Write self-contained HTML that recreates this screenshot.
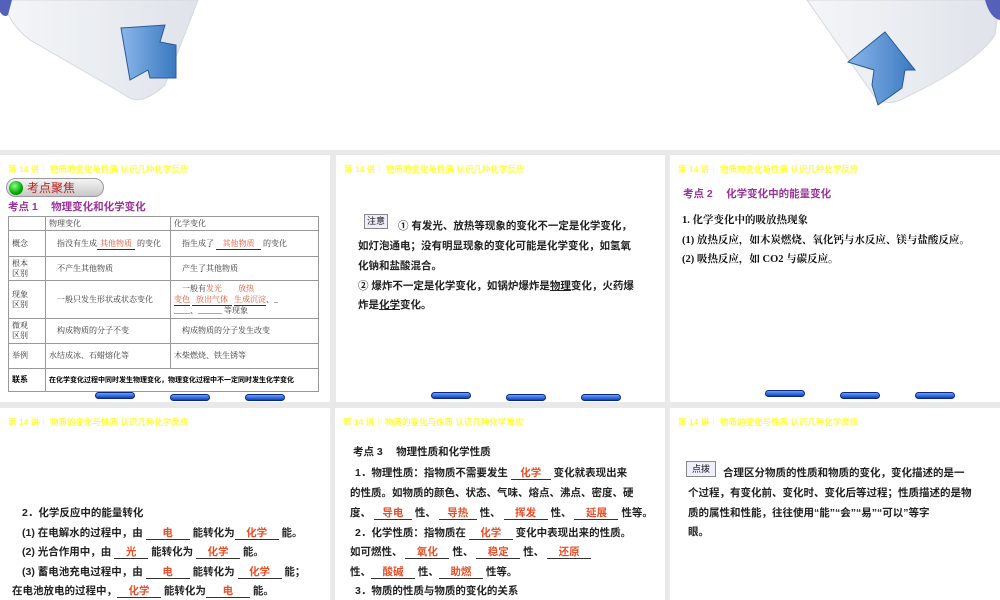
<!DOCTYPE html>
<html><head><meta charset="utf-8"><style>
*{margin:0;padding:0;box-sizing:border-box}
body{width:1000px;height:600px;overflow:hidden;background:#fff;position:relative;font-family:"Liberation Sans","Noto Sans CJK SC",sans-serif;color:#111}
.bg{position:absolute;left:0;top:150px;width:1000px;height:450px;background:#e9e9e9}
.s{position:absolute;background:#fff;overflow:hidden}
.hd{position:absolute;left:8px;top:8px;font-size:8.5px;color:#ffff40;font-weight:bold;white-space:nowrap}
.t{position:absolute;white-space:nowrap;font-size:10.5px;line-height:14px}
.b .t{font-weight:bold;color:#222}
.sf{font-family:"Liberation Serif","Noto Serif CJK SC",serif}
.p{color:#993399;font-weight:bold;font-size:10.5px}
.r{color:#e8502a}
.u{display:inline-block;border-bottom:1px solid #333;text-align:center;line-height:11px}
.nav{position:absolute;width:40px;height:7px;border-radius:4px;background:linear-gradient(#6aa0ff,#1040c0);border:1px solid #0a2a80}
table{position:absolute;left:8px;top:216px;border-collapse:collapse;font-size:8px;color:#333;font-family:"Liberation Serif","Noto Serif CJK SC",serif}
td{border:1px solid #999;padding:0 3px;vertical-align:middle;line-height:10px}
</style></head><body>
<svg style="position:absolute;left:0;top:0" width="1000" height="110">
<defs><linearGradient id="g" x1="0" x2="1"><stop offset="0" stop-color="#f4f6f8"/><stop offset="1" stop-color="#dfe3ea"/></linearGradient>
<linearGradient id="b" x1="0" x2="1"><stop offset="0" stop-color="#8ab6ea"/><stop offset="1" stop-color="#3a78c0"/></linearGradient></defs>
<path d="M2,0 L198,0 L165,85 Q140,108 125,95 L30,40 Q10,25 2,0Z" fill="url(#g)" stroke="#d6d8dc"/>
<path d="M0,0 L12,0 L8,15 Q4,18 0,12Z" fill="#5560b8"/>
<path d="M121,28 L165,25 L160,42 L176,45 L176,78 L150,78 L148,70 L130,80Z" fill="url(#b)" stroke="#2a5a98" stroke-width="1"/>
<path d="M807,0 L1000,0 L995,35 Q975,65 900,100 Q880,108 870,90Z" fill="url(#g)" stroke="#d6d8dc"/>
<path d="M985,0 L1000,0 L1000,20 Q990,18 985,0Z" fill="#5560b8"/>
<path d="M885,32 L915,70 L905,70 L902,88 L878,105 L872,85 L874,70 L848,62Z" fill="url(#b)" stroke="#2a5a98"/>
</svg>
<div class="bg"></div>

<div class="s" style="left:0;top:155px;width:330px;height:247px">
<div class="hd">第 14 讲｜ 物质的变化与性质 认识几种化学反应</div>
<div style="position:absolute;left:6px;top:23px;width:98px;height:19px;border-radius:10px;background:linear-gradient(#f4f4f4,#c8c8c8);border:1px solid #999"></div>
<div style="position:absolute;left:9px;top:26px;width:14px;height:14px;border-radius:50%;background:radial-gradient(circle at 40% 35%,#8f8,#0a0 60%,#060)"></div>
<div class="t" style="left:27px;top:26px;font-size:12px;color:#c02020">考点聚焦</div>
<div class="t p" style="left:8px;top:45px">考点 1　 物理变化和化学变化</div>
<table style="top:61px">
<tr style="height:14px"><td style="width:37px"></td><td style="width:125px">物理变化</td><td style="width:148px">化学变化</td></tr>
<tr style="height:26px"><td>概念</td><td>　指没有生成<span class="u r" style="width:38px">其他物质</span> 的变化</td><td>　指生成了 <span class="u r" style="width:45px">其他物质</span> 的变化</td></tr>
<tr style="height:24px"><td>根本<br>区别</td><td>　不产生其他物质</td><td>　产生了其他物质</td></tr>
<tr style="height:38px"><td>现象<br>区别</td><td>　一般只发生形状或状态变化</td><td>　一般有<span class="r">发光</span>　　<span class="r">放热</span><br><span class="u r">变色</span> <span class="u r" style="width:40px">放出气体</span> <span class="u r">生成沉淀</span>、_<br>____、______ 等现象</td></tr>
<tr style="height:25px"><td>微观<br>区别</td><td>　构成物质的分子不变</td><td>　构成物质的分子发生改变</td></tr>
<tr style="height:25px"><td>举例</td><td>水结成冰、石蜡熔化等</td><td>木柴燃烧、铁生锈等</td></tr>
<tr style="height:23px"><td style="color:#000;font-weight:bold;font-family:'Noto Sans CJK SC',sans-serif">联系</td><td colspan="2" style="color:#000;font-weight:bold;font-size:7px;font-family:'Noto Sans CJK SC',sans-serif">在化学变化过程中同时发生物理变化，物理变化过程中不一定同时发生化学变化</td></tr>
</table>
<div class="nav" style="left:95px;top:237px"></div><div class="nav" style="left:170px;top:239px"></div><div class="nav" style="left:245px;top:239px"></div>
</div>

<div class="s b" style="left:336px;top:155px;width:329px;height:247px">
<div class="hd">第 14 讲｜ 物质的变化与性质 认识几种化学反应</div>
<div style="position:absolute;left:28px;top:59px;width:24px;height:15px;border:1px solid #888;background:#eef;font-size:9px;line-height:13px;text-align:center">注意</div>
<div class="t" style="left:62px;top:64px">① 有发光、放热等现象的变化不一定是化学变化，</div>
<div class="t" style="left:22px;top:84px">如灯泡通电；没有明显现象的变化可能是化学变化，如氢氧</div>
<div class="t" style="left:22px;top:104px">化钠和盐酸混合。</div>
<div class="t" style="left:22px;top:124px">② 爆炸不一定是化学变化，如锅炉爆炸是<u>物理</u>变化，火药爆</div>
<div class="t" style="left:22px;top:143px">炸是<u>化学</u>变化。</div>
<div class="nav" style="left:95px;top:237px"></div><div class="nav" style="left:170px;top:239px"></div><div class="nav" style="left:245px;top:239px"></div>
</div>

<div class="s" style="left:670px;top:155px;width:330px;height:247px">
<div class="hd">第 14 讲｜ 物质的变化与性质 认识几种化学反应</div>
<div class="t p" style="left:13px;top:32px">考点 2　 化学变化中的能量变化</div>
<div class="t sf" style="left:12px;top:59px;font-size:10.5px;font-weight:bold">1. 化学变化中的吸放热现象</div>
<div class="t sf" style="left:12px;top:79px;font-size:10.5px;font-weight:bold">(1) 放热反应，如木炭燃烧、氧化钙与水反应、镁与盐酸反应。</div>
<div class="t sf" style="left:12px;top:98px;font-size:10.5px;font-weight:bold">(2) 吸热反应，如 CO2 与碳反应。</div>
<div class="nav" style="left:95px;top:235px"></div><div class="nav" style="left:170px;top:237px"></div><div class="nav" style="left:245px;top:237px"></div>
</div>

<div class="s b" style="left:0;top:408px;width:330px;height:192px">
<div class="hd">第 14 讲｜ 物质的变化与性质 认识几种化学反应</div>
<div class="t" style="left:22px;top:98px">2．化学反应中的能量转化</div>
<div class="t" style="left:22px;top:118px">(1) 在电解水的过程中，由 <span class="u r" style="width:44px">电</span> 能转化为<span class="u r" style="width:44px">化学</span> 能。</div>
<div class="t" style="left:22px;top:137px">(2) 光合作用中，由 <span class="u r" style="width:34px">光</span> 能转化为 <span class="u r" style="width:44px">化学</span> 能。</div>
<div class="t" style="left:22px;top:157px">(3) 蓄电池充电过程中，由 <span class="u r" style="width:44px">电</span> 能转化为 <span class="u r" style="width:44px">化学</span> 能；</div>
<div class="t" style="left:12px;top:176px">在电池放电的过程中，<span class="u r" style="width:44px">化学</span> 能转化为<span class="u r" style="width:44px">电</span> 能。</div>
</div>

<div class="s b" style="left:335px;top:408px;width:330px;height:192px">
<div class="hd">第 14 讲｜ 物质的变化与性质 认识几种化学反应</div>
<div class="t p" style="left:18px;top:37px">考点 3　 物理性质和化学性质</div>
<div class="t" style="left:20px;top:58px">1．物理性质：指物质不需要发生 <span class="u r" style="width:40px">化学</span> 变化就表现出来</div>
<div class="t" style="left:15px;top:78px">的性质。如物质的颜色、状态、气味、熔点、沸点、密度、硬</div>
<div class="t" style="left:15px;top:98px">度、 <span class="u r" style="width:38px">导电</span> 性、 <span class="u r" style="width:38px">导热</span> 性、 <span class="u r" style="width:44px">挥发</span> 性、 <span class="u r" style="width:44px">延展</span> 性等。</div>
<div class="t" style="left:20px;top:118px">2．化学性质：指物质在 <span class="u r" style="width:44px">化学</span> 变化中表现出来的性质。</div>
<div class="t" style="left:15px;top:137px">如可燃性、 <span class="u r" style="width:44px">氧化</span> 性、 <span class="u r" style="width:44px">稳定</span> 性、 <span class="u r" style="width:44px">还原</span></div>
<div class="t" style="left:15px;top:157px">性、<span class="u r" style="width:44px">酸碱</span> 性、<span class="u r" style="width:44px">助燃</span> 性等。</div>
<div class="t" style="left:20px;top:176px">3．物质的性质与物质的变化的关系</div>
</div>

<div class="s b" style="left:670px;top:408px;width:330px;height:192px">
<div class="hd">第 14 讲｜ 物质的变化与性质 认识几种化学反应</div>
<div style="position:absolute;left:16px;top:53px;width:30px;height:16px;border:1px solid #888;background:#eef;font-size:9px;line-height:14px;text-align:center">点拨</div>
<div class="t" style="left:53px;top:58px">合理区分物质的性质和物质的变化，变化描述的是一</div>
<div class="t" style="left:18px;top:78px">个过程，有变化前、变化时、变化后等过程；性质描述的是物</div>
<div class="t" style="left:18px;top:98px">质的属性和性能，往往使用“能”“会”“易”“可以”等字</div>
<div class="t" style="left:18px;top:117px">眼。</div>
</div>
</body></html>
